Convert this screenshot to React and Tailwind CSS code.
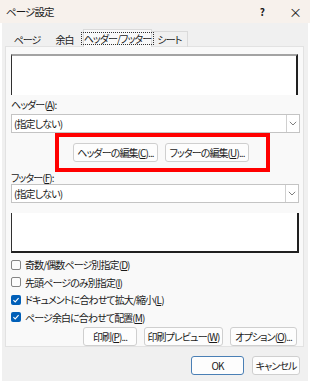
import React from 'react'

const jp = "font-['Noto_Sans_CJK_JP','Noto_Sans',sans-serif] [font-feature-settings:'palt'] tracking-[-0.9px] whitespace-nowrap"

function Chevron() {
  return (
    <svg width="8" height="5" viewBox="0 0 8 5" className="text-[#707070]">
      <path d="M0.8 0.8 L4 4 L7.2 0.8" fill="none" stroke="currentColor" strokeWidth="0.9" />
    </svg>
  )
}

function Select({ className = '' }) {
  return (
    <div className={`flex h-[19px] bg-white border border-[#c4c4c4] ${className}`}>
      <div className="flex-1 pl-[2px] flex items-center text-[10px] text-[#1a1a1a]">(指定しない)</div>
      <div className="w-[13px] border-l border-[#d0d0d0] flex items-center justify-center">
        <Chevron />
      </div>
    </div>
  )
}

function Btn({ children, className = '' }) {
  return (
    <div className={`h-[19px] flex items-center justify-center bg-[#fdfdfd] border border-[#cfcfcf] rounded-[3px] text-[10px] text-[#1a1a1a] ${className}`}>
      <span>{children}</span>
    </div>
  )
}

function Check({ checked, children }) {
  return (
    <div className="flex items-center h-[17.5px]">
      {checked ? (
        <div className="w-[10px] h-[10px] rounded-[2px] bg-[#005fb8] flex items-center justify-center">
          <svg width="8" height="8" viewBox="0 0 8 8">
            <path d="M1.4 4.2 L3.2 5.9 L6.6 2.2" fill="none" stroke="white" strokeWidth="1.1" />
          </svg>
        </div>
      ) : (
        <div className="w-[10px] h-[10px] rounded-[2px] bg-[#fcfcfc] border border-[#858585]" />
      )}
      <span className="ml-[4px] text-[10px] text-[#1a1a1a]">{children}</span>
    </div>
  )
}

export default function App() {
  return (
    <div className={`w-[315px] h-[387px] bg-white ${jp}`}>
      <div className="ml-[2px] w-[306px] h-[381px] bg-[#f0f0f0] flex flex-col">
        {/* title bar */}
        <div className="h-[23px] bg-[#f7f1ec] flex items-center pl-[4px] pr-[9px] -ml-[2px] w-[310px] text-[10.5px] text-[#1a1a1a]">
          <span className="ml-[2px]">ページ設定</span>
          <span className="ml-auto mr-[25px] text-[10px] font-bold">?</span>
          <span className="text-[13px] leading-none">×</span>
        </div>

        {/* tabs */}
        <div className="mt-[7px] h-[17px] flex items-end pl-[6px] text-[10px] text-[#1a1a1a] relative z-10">
          <div className="w-[38px] h-[16px] flex items-center justify-center">ページ</div>
          <div className="w-[37px] h-[16px] flex items-center justify-center">余白</div>
          <div className="w-[69px] h-[18px] bg-[#f9f9f9] border border-b-0 border-[#dadada] flex items-center justify-center">
            <span className="border border-dotted border-[#333] px-[2px] leading-[11px]">ヘッダー/フッター</span>
          </div>
          <div className="w-[36px] h-[16px] border-r border-t border-[#dadada] flex items-center justify-center">シート</div>
        </div>

        {/* panel */}
        <div className="ml-[3px] w-[299px] h-[301px] bg-[#f9f9f9] border border-[#e2e2e2] -mt-px flex flex-col px-[5px]">
          <div className="mt-[7px] h-[41px] bg-white border-t-2 border-t-[#a3a3a3] border-l border-l-[#303030] border-r-2 border-r-[#202020]" />
          <div className="mt-[2px] h-[16px] flex items-center text-[10px] text-[#1a1a1a]">
            <span>ヘッダー(<u>A</u>):</span>
          </div>
          <Select className="mt-[1px] w-[289px]" />
          <div className="ml-[44px] w-[215px] h-[40px] border-4 border-[#ff0000] flex items-center justify-center gap-[7px] pr-[3px]">
            <Btn className="w-[85px]">ヘッダーの編集(<u>C</u>)...</Btn>
            <Btn className="w-[84px]">フッターの編集(<u>U</u>)...</Btn>
          </div>
          <div className="h-[11px] flex items-center text-[10px] text-[#1a1a1a]">
            <span>フッター(<u>F</u>):</span>
          </div>
          <Select className="mt-[1px] w-[288px]" />
          <div className="mt-[10px] w-[288px] h-[40px] bg-white border-l border-l-[#303030] border-r-2 border-r-[#202020] border-b-2 border-b-[#202020]" />
          <div className="mt-[3px] flex flex-col">
            <Check>奇数/偶数ページ別指定(<u>D</u>)</Check>
            <Check>先頭ページのみ別指定(<u>I</u>)</Check>
            <Check checked>ドキュメントに合わせて拡大/縮小(<u>L</u>)</Check>
            <Check checked>ページ余白に合わせて配置(<u>M</u>)</Check>
          </div>
          <div className="mt-[1px] flex justify-end gap-[7px] pr-[1px]">
            <Btn className="w-[54px]">印刷(<u>P</u>)...</Btn>
            <Btn className="w-[79px]">印刷プレビュー(<u>W</u>)</Btn>
            <Btn className="w-[67px]">オプション(<u>O</u>)...</Btn>
          </div>
        </div>

        {/* dialog buttons */}
        <div className="mt-[9px] flex justify-end gap-[8px] pr-[8px]">
          <div className="w-[53px] h-[19px] flex items-center justify-center bg-[#fdfdfd] border border-[#4a7fb5] rounded-[3px] text-[10px] text-[#1a1a1a]">OK</div>
          <Btn className="w-[48px]">キャンセル</Btn>
        </div>
      </div>
    </div>
  )
}
